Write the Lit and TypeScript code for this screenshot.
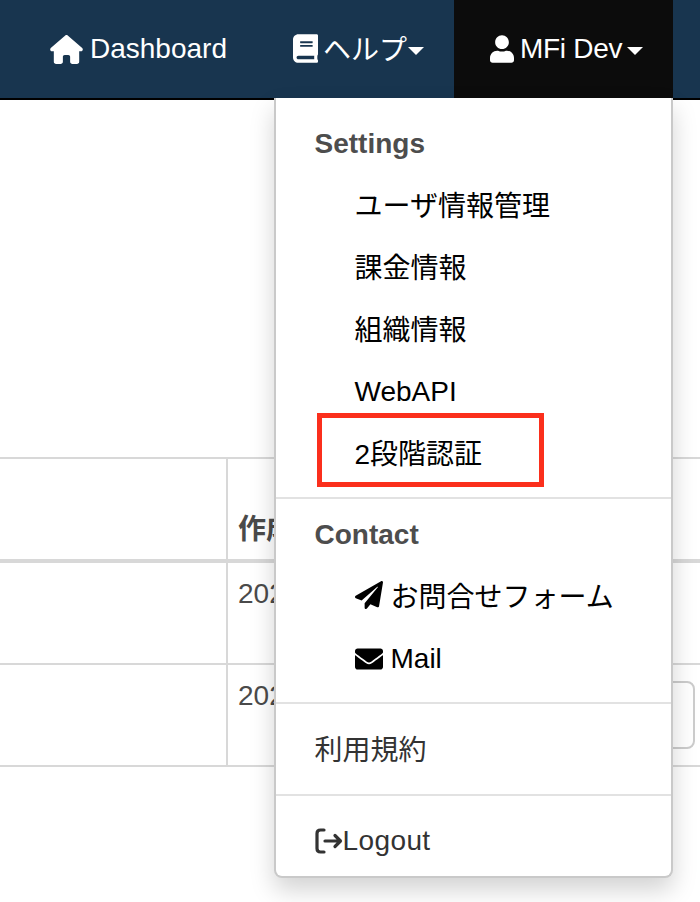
import { LitElement, html, css, svg } from "lit";
import { customElement } from "lit/decorators.js";

const home = svg`<path d="M575.800 255.500c0 18-15 32.100-32 32.100h-32l.7 160.200c0 2.700-.2 5.400-.5 8.100V472c0 22.100-17.900 40-40 40H456c-1.100 0-2.200 0-3.300-.1c-1.400 .1-2.800 .1-4.200 .1H416 392c-22.100 0-40-17.900-40-40V448 384c0-17.700-14.300-32-32-32H256c-17.700 0-32 14.300-32 32v64 24c0 22.100-17.900 40-40 40H160 128.100c-1.500 0-3-.1-4.500-.2c-1.200 .1-2.400 .2-3.600 .2H104c-22.100 0-40-17.900-40-40V360c0-.9 0-1.900 .1-2.800V287.600H32c-18 0-32-14-32-32.100c0-9 3-17 10-24L266.400 8c7-7 15-8 22-8s15 2 21 7L564.800 231.500c8 7 12 15 11 24z"/>`;
const book = svg`<path d="M448 360V24c0-13.300-10.700-24-24-24H96C43 0 0 43 0 96v320c0 53 43 96 96 96h328c13.300 0 24-10.700 24-24v-16c0-7.500-3.500-14.300-8.900-18.700-4.200-15.400-4.200-59.300 0-74.700 5.400-4.300 8.900-11.100 8.900-18.600zM128 134c0-3.300 2.700-6 6-6h212c3.300 0 6 2.700 6 6v20c0 3.300-2.700 6-6 6H134c-3.300 0-6-2.700-6-6v-20zm0 64c0-3.300 2.700-6 6-6h212c3.300 0 6 2.700 6 6v20c0 3.300-2.700 6-6 6H134c-3.300 0-6-2.700-6-6v-20zm253.400 250H96c-17.700 0-32-14.300-32-32 0-17.600 14.400-32 32-32h285.400c-1.900 17.100-1.900 46.900 0 64z"/>`;
const user = svg`<path d="M224 256c70.700 0 128-57.300 128-128S294.700 0 224 0 96 57.300 96 128s57.300 128 128 128zm89.600 32h-16.700c-22.200 10.200-46.900 16-72.900 16s-50.600-5.800-72.900-16h-16.700C60.200 288 0 348.200 0 422.400V464c0 26.500 21.500 48 48 48h352c26.500 0 48-21.500 48-48v-41.600c0-74.200-60.200-134.400-134.400-134.400z"/>`;
const plane = svg`<path d="M476 3.200L12.500 270.600c-18.100 10.400-15.800 35.600 2.200 43.200L121 358.400l287.300-253.200c5.500-4.900 13.300 2.600 8.600 8.300L176 407v80.500c0 23.600 28.500 32.900 42.500 15.800L282 426l124.600 52.200c14.200 6 30.400-2.900 33-18.200l72-432C515 7.800 493.300-6.800 476 3.200z"/>`;
const mail = svg`<path d="M502.300 190.800c3.900-3.100 9.700-.2 9.700 4.700V400c0 26.500-21.500 48-48 48H48c-26.500 0-48-21.500-48-48V195.600c0-5 5.700-7.800 9.700-4.700 22.400 17.400 52.100 39.500 154.100 113.600 21.100 15.400 56.700 47.800 92.200 47.600 35.700.3 72-32.800 92.300-47.600 102-74.100 131.600-96.300 154-113.700zM256 320c23.200.4 56.600-29.200 73.400-41.400 132.700-96.300 142.800-104.700 173.400-128.700 5.800-4.500 9.200-11.500 9.200-18.900v-19c0-26.500-21.500-48-48-48H48C21.500 64 0 85.500 0 112v19c0 7.400 3.400 14.300 9.200 18.900 30.600 23.900 40.700 32.400 173.400 128.700 16.800 12.200 50.200 41.800 73.400 41.400z"/>`;

@customElement("app-root")
export class AppRoot extends LitElement {
  static styles = css`
    :host {
      display: block;
      position: relative;
      width: 700px;
      height: 902px;
      overflow: hidden;
      background: #fff;
      font-family: "Liberation Sans", "Noto Sans CJK JP", sans-serif;
      font-size: 28px;
      color: #000;
    }
    .nav {
      display: flex;
      align-items: stretch;
      height: 98px;
      background: #18354f;
      border-bottom: 2px solid #000;
      color: #fff;
      padding-left: 50px;
    }
    .link { display: flex; align-items: center; box-sizing: border-box; }
    .icon { fill: currentColor; display: block; flex: none; }
    .dash { gap: 7px; width: 243px; }
    .help { gap: 5px; width: 161px; padding-bottom: 2px; }
    .me { gap: 6px; width: 219px; background: #0c0c0c; padding-left: 36px; }
    .caret {
      width: 0; height: 0; margin-top: 4px;
      border-left: 8px solid transparent;
      border-right: 8px solid transparent;
      border-top: 8px solid #fff;
    }
    .help .caret { margin-left: -4px; margin-top: 6px; }
    .me .caret { margin-left: -1px; }
    .name { letter-spacing: -0.3px; }
    .table { margin-top: 357px; border-top: 2px solid #d8d8d8; }
    .row { display: grid; grid-template-columns: 226px 1fr; border-bottom: 2px solid #d8d8d8; height: 100px; color: #4a4a4a; }
    .row.head { border-bottom-width: 4px; }
    .cell { border-left: 2px solid #d8d8d8; padding-left: 10px; display: flex; justify-content: space-between; }
    .cell.blank { border-left: 0; }
    .head .cell { align-items: flex-end; padding-bottom: 12px; font-weight: 700; }
    .val { padding-top: 15px; line-height: 32px; }
    .btn { width: 150px; height: 64px; margin: 16px 5px 0 0; border: 2px solid #ccc; border-radius: 8px; }
    .menu {
      position: absolute;
      left: 274px;
      top: 98px;
      width: 399px;
      box-sizing: border-box;
      background: #fff;
      border: 2px solid #c9c9c9;
      border-top: 0;
      border-radius: 0 0 8px 8px;
      box-shadow: 0 12px 24px rgba(0, 0, 0, 0.175);
      padding: 23px 0 5px;
    }
    .title { height: 44px; margin-bottom: 9px; padding: 2px 0 0 38.500px; box-sizing: border-box; display: flex; align-items: center; font-weight: 700; color: #4d4d4d; }
    .item { height: 62px; padding-left: 78.500px; display: flex; align-items: center; gap: 8px; box-sizing: border-box; }
    .cjk { padding-bottom: 2px; }
    .lat { padding-top: 2px; }
    .plain { height: 62px; padding-left: 38.500px; display: flex; align-items: center; color: #333; box-sizing: border-box; }
    .sep { height: 2px; margin: 13px 0 14px; background: #e2e2e2; }
    .sep.top { margin-bottom: 13px; }
    .sep.low { margin: 14px 0 13px; }
    .logout { fill: none; stroke: #333; stroke-width: 3.2; stroke-linecap: round; stroke-linejoin: round; display: block; flex: none; }
    .wide { letter-spacing: 0.4px; }
    .mark { position: absolute; left: 317px; top: 413px; width: 227px; height: 74px; box-sizing: border-box; border: 5px solid #fb2f1c; }
  `;

  render() {
    return html`
      <div class="nav">
        <div class="link dash"><svg class="icon" width="33" height="29" viewBox="0 0 576 512">${home}</svg>Dashboard</div>
        <div class="link help"><svg class="icon" width="25" height="29" viewBox="0 0 448 512">${book}</svg>ヘルプ<span class="caret"></span></div>
        <div class="link me"><svg class="icon" width="24" height="28" viewBox="0 0 448 512">${user}</svg><span class="name">MFi Dev</span><span class="caret"></span></div>
      </div>
      <div class="table">
        <div class="row head"><div class="cell blank"></div><div class="cell">作成日</div></div>
        <div class="row"><div class="cell blank"></div><div class="cell"><span class="val">2021/03/01</span></div></div>
        <div class="row"><div class="cell blank"></div><div class="cell"><span class="val">2021/03/01</span><span class="btn"></span></div></div>
      </div>
      <div class="menu">
        <div class="title">Settings</div>
        <div class="item cjk">ユーザ情報管理</div>
        <div class="item cjk">課金情報</div>
        <div class="item cjk">組織情報</div>
        <div class="item lat">WebAPI</div>
        <div class="item cjk">2段階認証</div>
        <div class="sep top"></div>
        <div class="title">Contact</div>
        <div class="item cjk"><svg class="icon" width="28" height="28" viewBox="0 0 512 512">${plane}</svg>お問合せフォーム</div>
        <div class="item lat"><svg class="icon" width="28" height="28" viewBox="0 0 512 512">${mail}</svg>Mail</div>
        <div class="sep"></div>
        <div class="plain cjk">利用規約</div>
        <div class="sep low"></div>
        <div class="plain lat">
          <svg class="logout" width="28" height="26" viewBox="0 0 28 26"><path d="M9 2H5.500Q2 2 2 5.500V20.500Q2 24 5.500 24H9"/><path d="M10 13H25M20 7.500L25.500 13L20 18.500"/></svg><span class="wide">Logout</span>
        </div>
      </div>
      <div class="mark"></div>
    `;
  }
}
